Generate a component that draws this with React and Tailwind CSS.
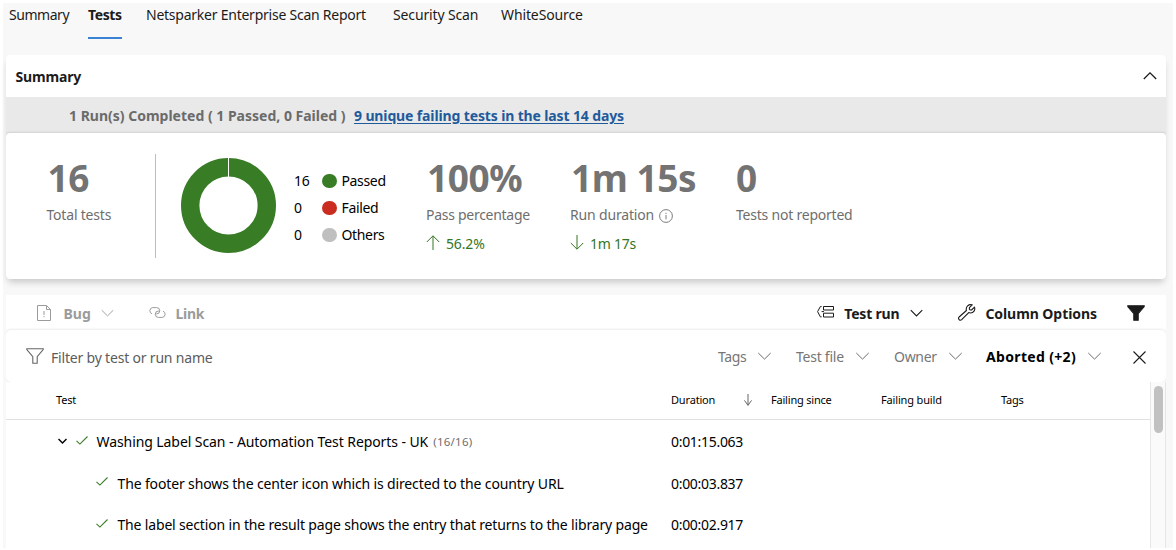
import React from "react";

function Chevron({ className = "", up = false, width = 14, height = 8, stroke = 1 }) {
  return (
    <svg className={`shrink-0 ${className}`} width={width} height={height} viewBox="0 0 14 8" fill="none" stroke="currentColor" strokeWidth={stroke}>
      <path d={up ? "M0.8 7 L7 0.9 L13.2 7" : "M0.8 1 L7 7.1 L13.2 1"} />
    </svg>
  );
}

function Arrow({ down = false, className = "", width = 14, height = 15 }) {
  return (
    <svg className={`shrink-0 ${className}`} width={width} height={height} viewBox="0 0 14 15" preserveAspectRatio="none" fill="none" stroke="currentColor" strokeWidth="1">
      {down ? <path vectorEffect="non-scaling-stroke" d="M7 0 V14 M0.8 8 L7 14.2 L13.2 8" /> : <path d="M7 15 V1 M0.8 7 L7 0.8 L13.2 7" />}
    </svg>
  );
}

function Check() {
  return (
    <svg className="shrink-0 text-[#3a7d27]" width="12" height="9" viewBox="0 0 12 9" fill="none" stroke="currentColor" strokeWidth="1.1">
      <path d="M0.5 4.8 L3.9 8.1 L11.5 0.5" />
    </svg>
  );
}

function BugIcon() {
  return (
    <svg className="shrink-0" width="14" height="16" viewBox="0 0 14 16" fill="none" stroke="currentColor" strokeWidth="1">
      <path d="M0.5 0.5 H9.5 L13.5 4.5 V15.5 H0.5 Z" />
      <path d="M9.5 0.5 V4.5 H13.5" />
      <path d="M7 6 V10 M7 11 V12.2" />
    </svg>
  );
}

function LinkIcon() {
  return (
    <svg className="shrink-0" width="17" height="11" viewBox="0 0 17 11" fill="none" stroke="currentColor" strokeWidth="1">
      <path d="M3 6.8 A3.2 3.2 0 0 1 3.7 0.6 H7.6 A3.1 3.1 0 0 1 7.6 6.9 H6.4" />
      <path d="M14 4.2 A3.2 3.2 0 0 1 13.3 10.4 H9.4 A3.1 3.1 0 0 1 9.4 4.1 H10.6" />
    </svg>
  );
}

function GroupIcon() {
  return (
    <svg className="shrink-0" width="17" height="12" viewBox="0 0 17 12" fill="none" stroke="currentColor" strokeWidth="1">
      <path d="M4.6 0.5 H3.4 L0.6 5.6 L3.4 10.9 H4.6" />
      <path d="M6.5 0.5 H16.5 V4 H6.5 Z M6.5 7.2 H16.5 V11 H6.5 Z M4.6 5.6 H7" />
    </svg>
  );
}

function WrenchIcon() {
  return (
    <svg className="shrink-0" width="18" height="17" viewBox="0 0 18 17" fill="none" stroke="currentColor" strokeWidth="1.1" strokeLinejoin="round">
      <path d="M14.2 0.9 L11.4 3.7 V5.2 L12.1 6 H13.5 L16.5 3.1 C17.5 6 15.6 9 12.6 9 C11.8 9 11.2 8.8 10.7 8.6 L3.7 15.7 C1.9 17.2 -0.5 14.8 1.1 13 L8.4 6.5 C7.5 2.8 10.6 -0.2 14.2 0.9 Z" />
    </svg>
  );
}

function Funnel({ filled = false }) {
  return (
    <svg className="shrink-0" width="18" height="16" viewBox="0 0 18 16" fill={filled ? "currentColor" : "none"} stroke="currentColor" strokeWidth="1.1">
      <path d="M0.8 1.5 V0.8 H17.2 V1.5 L11.2 8.6 V15.2 H6.8 V8.6 Z" />
    </svg>
  );
}

function Tab({ label, className }) {
  return <div className={`h-[36px] leading-[24px] ${className}`}>{label}</div>;
}

function Legend({ count, label, dot }) {
  return (
    <div className="flex h-[27px] items-center text-black">
      <span className="w-[28px] tracking-[-0.3px]">{count}</span>
      <span className={`size-[14.5px] rounded-full ${dot}`} />
      <span className="ml-[5px] tracking-[-0.35px]">{label}</span>
    </div>
  );
}

function Metric({ value, label, className = "", labelClass = "", children }) {
  return (
    <div className={className}>
      <div className="h-[46px] pt-[2px] pl-px text-[37px] leading-[46px] font-bold tracking-[-0.45px] text-[#737373]">{value}</div>
      <div className={`mt-[3px] flex h-[25px] items-center text-[#6e6e6e] ${labelClass}`}>{label}</div>
      {children}
    </div>
  );
}

function FilterDrop({ label, className }) {
  return (
    <div className={`-mt-px flex items-center gap-[11px] ${className}`}>
      <span>{label}</span>
      <Chevron width={15} className="-translate-y-px text-[#6c6c6c]" />
    </div>
  );
}

function TestRow({ name, duration, track }) {
  return (
    <div className="flex h-[41.6px] items-center">
      <div className="flex w-[665px] items-center gap-[10px] pl-[89.5px]">
        <span className="-mt-1">
          <Check />
        </span>
        <span className={track}>{name}</span>
      </div>
      <div className="tracking-[-0.3px]">{duration}</div>
    </div>
  );
}

export default function App() {
  return (
    <div className="h-[550px] w-[1176px] overflow-hidden bg-white pt-[3px] pl-[3px] font-['Noto_Sans','Open_Sans',sans-serif] text-[14px] leading-5 whitespace-nowrap text-[#1b1b1b]">
      <div className="flex h-[545px] w-[1170px] flex-col bg-[#f8f8f8] pr-[7px] pl-[3px]">
        <nav className="flex h-[52px] shrink-0 pl-[3px]">
          <Tab label="Summary" className="w-[79px] tracking-[-0.45px]" />
          <div className="w-[58px]">
            <Tab label="Tests" className="w-[34px] border-b-2 border-[#3a82d4] font-bold tracking-[-0.4px]" />
          </div>
          <Tab label="Netsparker Enterprise Scan Report" className="w-[247px] tracking-[-0.24px]" />
          <Tab label="Security Scan" className="w-[108px] tracking-[-0.14px]" />
          <Tab label="WhiteSource" className="tracking-[-0.12px]" />
        </nav>

        <section className="flex h-[224px] shrink-0 flex-col overflow-hidden rounded-[4px] bg-[#e9e9e9] shadow-[0_5px_7px_-2px_rgba(0,0,0,0.2)]">
          <header className="flex h-[42px] items-center justify-between bg-white pt-[3px] pr-[9px] pb-px pl-[9.5px]">
            <span className="font-bold tracking-[-0.15px]">Summary</span>
            <Chevron up stroke={1.3} className="-translate-y-px" />
          </header>
          <div className="flex h-[36px] items-center pt-[2px] pl-[63px] font-bold">
            <span className="w-[285px] text-[#6b6b6b]">1 Run(s) Completed ( 1 Passed, 0 Failed )</span>
            <a className="tracking-[-0.13px] text-[#1f5a9b] underline underline-offset-2">9 unique failing tests in the last 14 days</a>
          </div>
          <div className="flex h-[146px] rounded-[4px] bg-white pt-[20px] shadow-[0_-1px_2px_rgba(0,0,0,0.1)]">
            <Metric value="16" label="Total tests" className="w-[149px] pl-[40.5px]" labelClass="tracking-[-0.2px]" />
            <div className="mt-px h-[104px] w-px bg-[#bdbdbd]" />
            <svg className="mt-[5px] ml-[25px] shrink-0" width="95" height="95" viewBox="0 0 95 95">
              <circle cx="47.5" cy="47.5" r="38.3" fill="none" stroke="#387c26" strokeWidth="18.4" />
              <path d="M47.5 0 V19" stroke="#fff" strokeWidth="1" />
            </svg>
            <div className="ml-[18px] w-[133px] pt-[14.5px]">
              <Legend count="16" label="Passed" dot="bg-[#387c26]" />
              <Legend count="0" label="Failed" dot="bg-[#cb2c20]" />
              <Legend count="0" label="Others" dot="bg-[#bfbfbf]" />
            </div>
            <Metric value="100%" label="Pass percentage" className="-ml-px w-[144px]" labelClass="tracking-[-0.28px]">
              <div className="mt-[7px] flex items-center text-[#34761f]">
                <Arrow className="-mt-1" />
                <span className="ml-[6px] tracking-[-0.15px]">56.2%</span>
              </div>
            </Metric>
            <Metric
              value="1m 15s"
              label={
                <>
                  <span className="tracking-[-0.17px]">Run duration</span>
                  <svg className="mt-[2px] ml-[5px]" width="14" height="14" viewBox="0 0 14 14" fill="none" stroke="#6e6e6e" strokeWidth="0.9">
                    <circle cx="7" cy="7" r="6.4" />
                    <path d="M7 6 V10.4 M7 3.8 V5" />
                  </svg>
                </>
              }
              className="w-[166px]"
            >
              <div className="mt-[7px] flex items-center text-[#34761f]">
                <Arrow down className="-mt-1" />
                <span className="ml-[6px] tracking-[-0.24px]">1m 17s</span>
              </div>
            </Metric>
            <Metric value="0" label="Tests not reported" className="-ml-px" labelClass="pl-px tracking-[-0.22px]" />
          </div>
        </section>

        <section className="mt-[16px] flex min-h-0 flex-1 flex-col bg-white">
          <div className="flex h-[35px] shrink-0 items-center pt-[2px] font-bold">
            <div className="flex w-[143px] items-center pl-[31px] text-[#9b9b9b]">
              <span className="-mt-[2px]">
                <BugIcon />
              </span>
              <span className="ml-[12.5px]">Bug</span>
              <Chevron className="-mt-[2px] ml-[10.5px]" width={13} />
            </div>
            <div className="flex items-center text-[#9b9b9b]">
              <span className="-mt-[2px]">
                <LinkIcon />
              </span>
              <span className="ml-[9.5px] tracking-[-0.25px]">Link</span>
            </div>
            <div className="ml-auto flex items-center">
              <span className="-mt-[3px]">
                <GroupIcon />
              </span>
              <span className="ml-[10px] tracking-[-0.2px]">Test run</span>
              <Chevron className="-mt-[2px] ml-[11px]" width={13} stroke={1.2} />
            </div>
            <div className="ml-[35px] flex items-center">
              <span className="-mt-[3px]">
                <WrenchIcon />
              </span>
              <span className="ml-[9px] tracking-[-0.06px]">Column Options</span>
            </div>
            <div className="-mt-[2px] mr-[21px] ml-[30px]">
              <Funnel filled />
            </div>
          </div>

          <div className="flex h-[52px] shrink-0 items-center rounded-[5px] bg-white pt-[3px] pl-[20px] text-[#767676] shadow-[0_0_3px_rgba(0,0,0,0.16)] [clip-path:inset(-3px_0_0_0)]">
            <span className="-mt-1 text-[#666]">
              <Funnel />
            </span>
            <span className="ml-[7px] tracking-[-0.19px] text-[#5c5c5c]">Filter by test or run name</span>
            <FilterDrop label="Tags" className="ml-auto w-[78px] tracking-[-0.35px]" />
            <FilterDrop label="Test file" className="w-[98px] tracking-[-0.25px]" />
            <FilterDrop label="Owner" className="w-[92px] tracking-[-0.3px]" />
            <FilterDrop label="Aborted (+2)" className="w-[147px] font-bold tracking-[0.34px] text-black" />
            <svg className="mr-[20px] shrink-0 text-[#1b1b1b]" width="13" height="13" viewBox="0 0 13 13" fill="none" stroke="currentColor" strokeWidth="1.1">
              <path d="M0.5 0.5 L12.5 12.5 M12.5 0.5 L0.5 12.5" />
            </svg>
          </div>

          <div className="flex min-h-0 flex-1">
            <div className="min-w-0 flex-1 overflow-hidden text-black">
              <div className="flex h-[38px] items-center border-b border-[#e0e0e0] pb-[2px] text-[11px]">
                <div className="w-[665px] pl-[50px] tracking-[-0.2px]">Test</div>
                <div className="flex w-[100px] items-center tracking-[-0.17px]">
                  <span className="w-[73px]">Duration</span>
                  <Arrow down width={8} height={12} className="text-[#666]" />
                </div>
                <div className="w-[110px] tracking-[-0.2px]">Failing since</div>
                <div className="w-[120px] tracking-[-0.16px]">Failing build</div>
                <div className="tracking-[-0.2px]">Tags</div>
              </div>
              <div className="mt-[1.5px] flex h-[41.6px] items-center">
                <div className="flex w-[665px] items-center pl-[52px]">
                  <Chevron width={9} height={6} stroke={2.2} className="-mt-[3px]" />
                  <span className="-mt-1 mr-[9px] ml-[8.5px]">
                    <Check />
                  </span>
                  <span className="tracking-[-0.08px]">Washing Label Scan - Automation Test Reports - UK</span>
                  <span className="ml-[5px] text-[11.5px] tracking-[0.25px] text-[#6e6e6e]">(16/16)</span>
                </div>
                <div className="tracking-[-0.3px]">0:01:15.063</div>
              </div>
              <TestRow name="The footer shows the center icon which is directed to the country URL" duration="0:00:03.837" track="tracking-[-0.135px]" />
              <TestRow name="The label section in the result page shows the entry that returns to the library page" duration="0:00:02.917" track="tracking-[-0.165px]" />
            </div>
            <div className="w-[16px] border-x border-[#e6e6e6] bg-[#fafafa] pt-[4px] pl-[3px]">
              <div className="h-[47px] w-[9px] rounded-full bg-[#c1c1c1]" />
            </div>
          </div>
        </section>
      </div>
    </div>
  );
}
